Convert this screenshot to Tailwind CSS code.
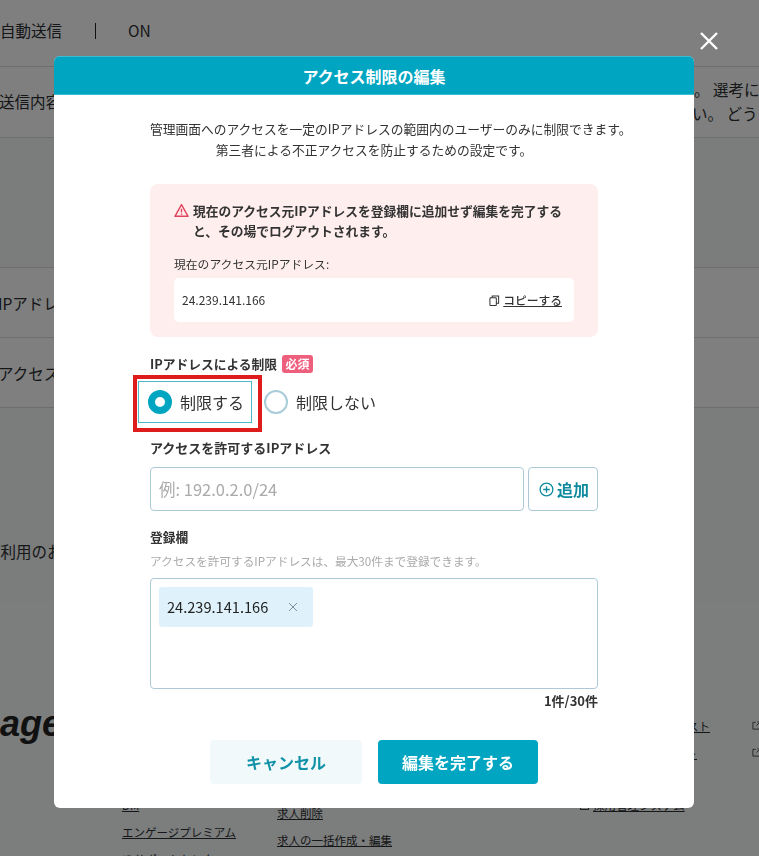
<!DOCTYPE html>
<html lang="ja">
<head>
    <meta charset="UTF-8">
    <title>アクセス制限の編集</title>
    <script src="https://cdn.jsdelivr.net/npm/@tailwindcss/browser@4"></script>
</head>
<body class="relative w-[759px] h-[856px] overflow-hidden bg-white text-[#2b2e30] font-['Noto_Sans_CJK_JP','Noto_Sans',sans-serif]">
    <!-- 背景ページ -->
    <div class="h-[856px] flex flex-col overflow-hidden">
        <div class="h-[67px] shrink-0 border-b border-[#ddd] flex items-center pb-[5px] text-[15.5px]">
            <span class="w-[95px]">自動送信</span>
            <span class="w-px h-[16px] bg-[#222]"></span>
            <span class="ml-[32px]">ON</span>
        </div>
        <div class="h-[71px] shrink-0 border-b border-[#ddd] flex justify-between items-center text-[15.5px]">
            <span class="-ml-[1px]">送信内容</span>
            <div class="w-[65px] text-[15.5px] leading-[24px] whitespace-nowrap overflow-hidden -mt-[3px]">
                <p>。 選考に</p>
                <p class="-ml-[2px]">い。 どう</p>
            </div>
        </div>
        <div class="h-[130px] shrink-0 border-b border-[#ddd] bg-[#f7f8f8]"></div>
        <div class="h-[70px] shrink-0 border-b border-[#ddd] flex items-center pt-[2px] text-[15.5px]">
            <span class="-ml-[2px]">IPアドレ</span>
        </div>
        <div class="h-[70px] shrink-0 border-b border-[#ddd] flex items-center pt-[2px] text-[15.5px]">
            <span class="-ml-[2px]">アクセス</span>
        </div>
        <div class="h-[194px] shrink-0 bg-[#f7f8f8] flex items-end pb-[39px] text-[15.5px]">
            <span class="-ml-[15px]">ご利用のお</span>
        </div>
        <!-- フッター -->
        <div class="flex-1 bg-[#f8fafa] flex text-[11.5px]">
            <div class="w-[122px] shrink-0 pt-[102px]">
                <span class="block -ml-[64px] text-[36px] leading-[40px] font-bold italic text-[#222] font-['Liberation_Sans',sans-serif]">engage</span>
            </div>
            <div class="w-[155px] shrink-0 pt-[195px] flex flex-col gap-[10px]">
                <a class="underline leading-[17px]">DM</a>
                <a class="underline leading-[17px]">エンゲージプレミアム</a>
                <div class="flex items-center gap-[3px] leading-[17px]">
                    <svg viewBox="0 0 10 10" class="size-[9px]" fill="none" stroke="#444" stroke-width="1"><path d="M4 1.5 H1 V9 H8.5 V6 M5 5 L9 1 M6 1 H9 V4"/></svg>
                    <a class="underline">サポートセンター</a>
                </div>
            </div>
            <div class="w-[303px] shrink-0 pt-[203px] flex flex-col gap-[10px]">
                <a class="underline leading-[17px]">求人削除</a>
                <a class="underline leading-[17px]">求人の一括作成・編集</a>
            </div>
            <div class="w-[181px] shrink-0 pt-[116px] flex flex-col gap-[10px] text-[11.5px]">
                <div class="flex justify-between leading-[17px]">
                    <a class="underline w-[130px] text-right">リスト</a>
                    <svg viewBox="0 0 10 10" class="size-[9px] mt-[3px]" fill="none" stroke="#444" stroke-width="1"><path d="M4 1.5 H1 V9 H8.5 V6 M5 5 L9 1 M6 1 H9 V4"/></svg>
                </div>
                <div class="flex justify-between leading-[17px]">
                    <a class="underline w-[117px] text-right">ト</a>
                    <svg viewBox="0 0 10 10" class="size-[9px] mt-[3px]" fill="none" stroke="#444" stroke-width="1"><path d="M4 1.5 H1 V9 H8.5 V6 M5 5 L9 1 M6 1 H9 V4"/></svg>
                </div>
                <div class="flex gap-[4px] leading-[17px] mt-[25px]"><span class="size-[9px] border border-[#444] mt-[4px]"></span><a class="underline">採用管理システム</a></div>
            </div>
        </div>
    </div>

    <!-- モーダル -->
    <div class="fixed inset-0 bg-black/50 flex pl-[54px] pt-[56px]">
        <button class="absolute left-[699px] top-[31px] size-[20px] text-white">
            <svg viewBox="0 0 20 20" class="size-[20px]" fill="none" stroke="currentColor" stroke-width="2.4"><path d="M2 2 L18 18 M18 2 L2 18"/></svg>
        </button>
        <div class="w-[640px] h-[752px] bg-white rounded-[6px] overflow-hidden flex flex-col">
            <h2 class="h-[39px] shrink-0 bg-[#00a5c1] border-t border-b border-[#3cbcd2] text-white text-[16px] font-bold flex items-center justify-center">アクセス制限の編集</h2>
            <div class="relative px-[96px] flex-1">
                <div class="pt-[23px] text-center text-[12.75px] leading-[21px] text-[#333] whitespace-nowrap">
                    <p>管理画面へのアクセスを一定のIPアドレスの範囲内のユーザーのみに制限できます。</p>
                    <p>第三者による不正アクセスを防止するための設定です。</p>
                </div>

                <!-- 警告 -->
                <div class="mt-[24px] h-[153px] bg-[#feeeee] rounded-[8px] px-[24px] pt-[17px]">
                    <div class="flex gap-[4px] pr-[10px] text-[12.75px] leading-[20px] font-bold text-[#333]">
                        <svg viewBox="0 0 16 16" class="size-[15px] mt-[2px] shrink-0" fill="none" stroke="#e2435c" stroke-width="1.5" stroke-linejoin="round"><path d="M8 1.8 L15 14.2 H1 Z"/><path d="M8 6 V10.2 M8 11.3 V12.6"/></svg>
                        <p>現在のアクセス元IPアドレスを登録欄に追加せず編集を完了すると、その場でログアウトされます。</p>
                    </div>
                    <p class="mt-[14px] text-[11.8px] leading-[17px] text-[#333]">現在のアクセス元IPアドレス:</p>
                    <div class="mt-[6px] h-[44px] bg-white rounded-[5px] px-[8px] pr-[12px] flex items-center justify-between text-[12px] text-[#333]">
                        <span>24.239.141.166</span>
                        <span class="flex items-center gap-[3px]">
                            <svg viewBox="0 0 12 12" class="size-[11px]" fill="none" stroke="#333" stroke-width="1.1"><rect x="1" y="3" width="7" height="8.5" rx="1"/><path d="M3.5 3 V1 H10.5 V9 H8"/></svg>
                            <span class="underline font-medium text-[11.75px]">コピーする</span>
                        </span>
                    </div>
                </div>

                <!-- IPアドレスによる制限 -->
                <div class="mt-[17px] flex items-center gap-[5px] h-[20px]">
                    <span class="text-[12.75px] font-bold text-[#333]">IPアドレスによる制限</span>
                    <span class="h-[18px] w-[31px] rounded-[3px] bg-[#ee5f7d] text-white text-[12px] font-bold flex items-center justify-center">必須</span>
                </div>
                <div class="relative mt-[6px] flex items-center h-[44px] -ml-[12px]">
                    <label class="w-[114px] h-[42px] flex items-center gap-[8px] pl-[9px] border border-[#4fb8c8] shrink-0">
                        <span class="size-[24px] rounded-full border-[7px] border-[#00a5c1] bg-white"></span>
                        <span class="text-[16px] text-[#333]">制限する</span>
                    </label>
                    <label class="ml-[12px] flex items-center gap-[8px]">
                        <span class="size-[24px] rounded-full border-2 border-[#a9cdd8] bg-white"></span>
                        <span class="text-[16px] text-[#333]">制限しない</span>
                    </label>
                    <div class="absolute -left-[5px] -top-[5px] w-[129px] h-[57px] border-[4px] border-[#df1c1c] pointer-events-none"></div>
                </div>

                <p class="mt-[15px] text-[13px] leading-[18px] font-bold text-[#333]">アクセスを許可するIPアドレス</p>
                <div class="mt-[10px] flex gap-[4px]">
                    <input placeholder="例: 192.0.2.0/24" class="w-[374px] h-[44px] border border-[#abc9d6] rounded-[4px] px-[8px] text-[16.5px] placeholder:text-[#aaa]">
                    <button class="w-[70px] h-[44px] border border-[#abc9d6] rounded-[4px] pl-[2px] flex items-center justify-center gap-[3px] text-[#0e8a9e] text-[16px] font-bold">
                        <svg viewBox="0 0 16 16" class="size-[15px]" fill="none" stroke="currentColor" stroke-width="1.4"><circle cx="8" cy="8" r="6.8"/><path d="M8 4.5 V11.5 M4.5 8 H11.5"/></svg>
                        追加
                    </button>
                </div>

                <p class="mt-[16px] text-[12.75px] leading-[20px] font-bold text-[#333]">登録欄</p>
                <p class="mt-[6px] text-[11.67px] leading-[16px] text-[#aaa]">アクセスを許可するIPアドレスは、最大30件まで登録できます。</p>
                <div class="mt-[9px] h-[111px] border border-[#abc9d6] rounded-[4px] p-[8px]">
                    <div class="w-[154px] h-[40px] bg-[#dff2fb] rounded-[3px] pl-[8px] pr-[15px] flex items-center justify-between text-[14.6px] text-[#222]">
                        <span>24.239.141.166</span>
                        <svg viewBox="0 0 10 10" class="size-[10px]" fill="none" stroke="#7f8f98" stroke-width="1"><path d="M1 1 L9 9 M9 1 L1 9"/></svg>
                    </div>
                </div>
                <p class="mt-[3px] text-right text-[13px] leading-[18px] font-bold text-[#333]">1件/30件</p>

                <div class="mt-[30px] flex justify-center gap-[16px]">
                    <button class="w-[152px] h-[44px] bg-[#f2f9fb] rounded-[4px] text-[#1192a8] text-[16px] font-bold">キャンセル</button>
                    <button class="w-[160px] h-[44px] bg-[#00a5c1] rounded-[4px] text-white text-[16px] font-bold">編集を完了する</button>
                </div>
            </div>
        </div>
    </div>
</body>
</html>
